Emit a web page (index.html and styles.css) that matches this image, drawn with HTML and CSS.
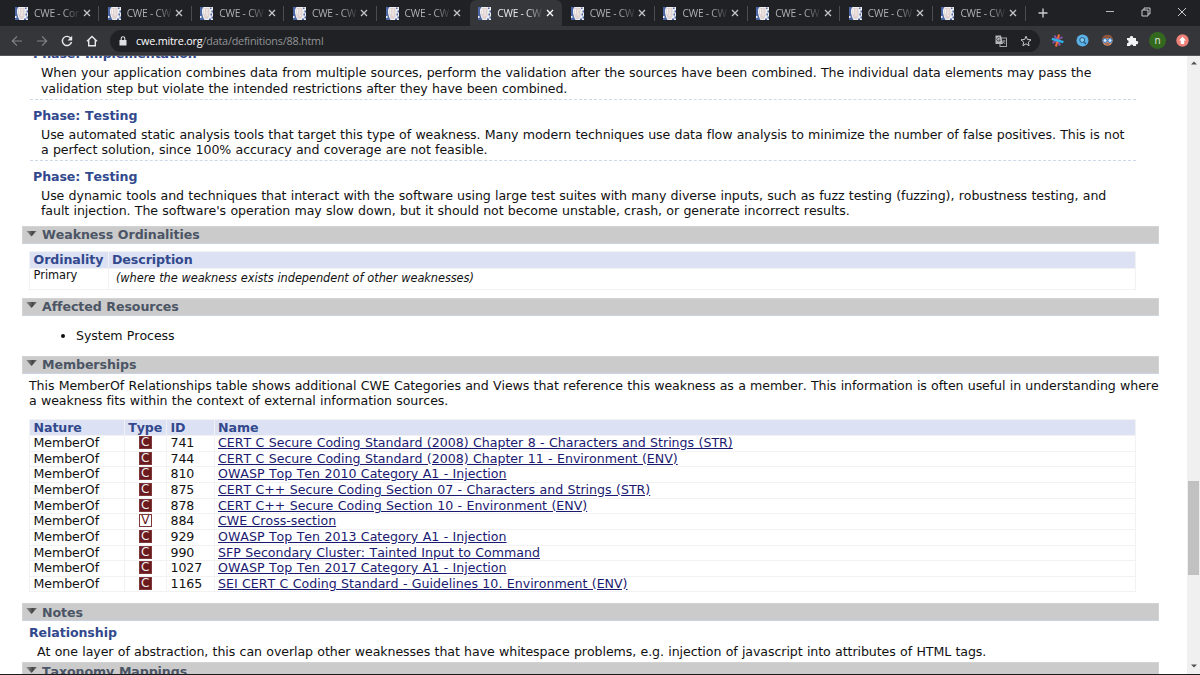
FILE: index.html
```html
<!DOCTYPE html>
<html lang="en">
  <head>
    <meta charset="UTF-8" />
    <meta name="viewport" content="width=device-width, initial-scale=1.0" />
    <title>CWE - CWE-88</title>
    <link rel="stylesheet" href="styles.css">
  </head>
  <body>
    <svg class="defs" width="0" height="0">
      <symbol id="favicon" viewBox="0 0 13 13">
        <rect width="13" height="13" fill="#eef0f4" />
        <path d="M0 0h3.500L2 2.500V6l1 4 1.500 3H0v-2h1.500V9H0zM10 .5h1.500V2H10zM11.500 3.500H13v2h-1.500zM10.500 6.500H12v2h-1.500zM11.500 9.500H13v2h-1.500zM9 11.500h2V13H9z" fill="#4c66a3" />
        <path d="M4 1C2.500 4 3 8 5 12h3l1.500-3V1z" fill="#e0d3d2" />
        <path d="M4.500 2v5M7 2v7" stroke="#f6f0ee" />
      </symbol>
      <symbol id="close" viewBox="0 0 8 8">
        <path d="M1 1l6 6M7 1L1 7" fill="none" stroke="currentColor" stroke-width="1.300" />
      </symbol>
    </svg>

    <div class="tabs">
      <div class="tab"><svg class="favicon"><use href="#favicon" /></svg><span>CWE - Cor</span><svg class="close"><use href="#close" /></svg></div>
      <div class="tab"><svg class="favicon"><use href="#favicon" /></svg><span>CWE - CW</span><svg class="close"><use href="#close" /></svg></div>
      <div class="tab"><svg class="favicon"><use href="#favicon" /></svg><span>CWE - CW</span><svg class="close"><use href="#close" /></svg></div>
      <div class="tab"><svg class="favicon"><use href="#favicon" /></svg><span>CWE - CW</span><svg class="close"><use href="#close" /></svg></div>
      <div class="tab before-active"><svg class="favicon"><use href="#favicon" /></svg><span>CWE - CW</span><svg class="close"><use href="#close" /></svg></div>
      <div class="tab active"><svg class="favicon"><use href="#favicon" /></svg><span>CWE - CW</span><svg class="close"><use href="#close" /></svg></div>
      <div class="tab"><svg class="favicon"><use href="#favicon" /></svg><span>CWE - CW</span><svg class="close"><use href="#close" /></svg></div>
      <div class="tab"><svg class="favicon"><use href="#favicon" /></svg><span>CWE - CW</span><svg class="close"><use href="#close" /></svg></div>
      <div class="tab"><svg class="favicon"><use href="#favicon" /></svg><span>CWE - CW</span><svg class="close"><use href="#close" /></svg></div>
      <div class="tab"><svg class="favicon"><use href="#favicon" /></svg><span>CWE - CW</span><svg class="close"><use href="#close" /></svg></div>
      <div class="tab"><svg class="favicon"><use href="#favicon" /></svg><span>CWE - CW</span><svg class="close"><use href="#close" /></svg></div>
      <svg class="new-tab" viewBox="0 0 10 10"><path d="M5 .5v9M.5 5h9" stroke="#c9cbce" stroke-width="1.400" /></svg>
      <div class="window-buttons">
        <svg viewBox="0 0 10 10"><path d="M1 4.500h8" stroke="#bbb" /></svg>
        <svg viewBox="0 0 10 10"><path d="M1 3h6v6H1zM3 3V1h6v6H7" fill="none" stroke="#ccc" /></svg>
        <svg viewBox="0 0 10 10"><path d="M1 1l8 8M9 1L1 9" stroke="#ccc" /></svg>
      </div>
    </div>

    <div class="toolbar">
      <div class="nav">
        <svg viewBox="0 0 12 12"><path d="M11 6H1.500M6 1.300L1.300 6 6 10.700" fill="none" stroke="#808286" stroke-width="1.200" /></svg>
        <svg viewBox="0 0 12 12"><path d="M1 6h9.500M6 1.300L10.700 6 6 10.700" fill="none" stroke="#808286" stroke-width="1.200" /></svg>
        <svg viewBox="0 0 12 12"><path d="M9.800 3.300A4.600 4.600 0 1 0 10.500 7" fill="none" stroke="#e8eaed" stroke-width="1.400" /><path d="M11.200.8v4.700H6.500z" fill="#e8eaed" /></svg>
        <svg viewBox="0 0 12 12"><path d="M1 6.300L6 1.500l5 4.800M2.700 5.200v5.600h6.600V5.200" fill="none" stroke="#e8eaed" stroke-width="1.400" /></svg>
      </div>
      <div class="address">
        <svg class="lock" viewBox="0 0 8 10"><path d="M.5 4h7v5.500h-7z" fill="#dfe0e2" /><path d="M2.200 4V2.300a1.800 1.600 0 0 1 3.600 0V4" fill="none" stroke="#dfe0e2" stroke-width="1.100" /></svg>
        <span class="url"><b>cwe.mitre.org</b>/data/definitions/88.html</span>
        <svg class="translate" viewBox="0 0 12 12"><rect x="5" y="3" width="6.500" height="8.500" fill="none" stroke="#b5b6b9" stroke-width=".9" /><path d="M.5.5H6l2 8.500H.5z" fill="#b5b6b9" /><path d="M5 3.200A1.800 1.800 0 1 0 5.300 5H3.700" fill="none" stroke="#303134" stroke-width=".8" /><path d="M7.500 6h3M9 5v1c0 1.500-1 2-1.500 2.500M8.500 7l1.700 2" fill="none" stroke="#b5b6b9" stroke-width=".7" /></svg>
        <svg class="star" viewBox="0 0 12 12"><path d="M6 1.200l1.400 3.300 3.600.3-2.700 2.400.8 3.500L6 8.800l-3.100 1.900.8-3.500L1 4.800l3.600-.3z" fill="none" stroke="#c9cacd" /></svg>
      </div>
      <div class="extensions">
        <svg viewBox="0 0 13 13"><path d="M3.500 1.500l5.500 10" stroke="#8656a8" stroke-width="2.200" /><path d="M8 .5L5 12.500" stroke="#ef6a3a" stroke-width="2.200" /><path d="M1.500 9L11.500 3" stroke="#8656a8" stroke-width="1.800" /><path d="M.8 4.800l11.600 3.400" stroke="#2fb3e8" stroke-width="2.400" /></svg>
        <svg viewBox="0 0 13 13"><circle cx="6.500" cy="6.500" r="6" fill="#5bb1e6" /><circle cx="6.200" cy="6" r="2.400" fill="#89cdf3" stroke="#24577d" /><path d="M8 8l2 2" stroke="#24577d" stroke-width="1.200" /></svg>
        <svg viewBox="0 0 13 13"><circle cx="6.500" cy="6.500" r="5.200" fill="#c98f6e" /><path d="M1.300 6C1 2 4 .8 6.500.8S12 2 11.700 6l-2-2-6 .5z" fill="#8d553b" /><circle cx="4" cy="6.500" r="2" fill="#d7ecff" stroke="#2b7fd0" /><circle cx="9" cy="6.500" r="2" fill="#d7ecff" stroke="#2b7fd0" /><path d="M4.500 10h4" stroke="#8d3f36" stroke-width=".8" /></svg>
        <svg viewBox="0 0 13 13"><path d="M1 4h2.900a1.700 1.700 0 1 1 3.300 0H10v3a1.700 1.700 0 1 1 0 3.200V12H7.300a1.600 1.600 0 0 0-3.200 0H1V9.300a1.600 1.600 0 0 0 0-3.200z" fill="#f1f3f4" /></svg>
        <span class="avatar">n</span>
        <svg viewBox="0 0 13 13"><circle cx="6.500" cy="6.500" r="6.200" fill="#ee8179" /><path d="M6.500 2.800L10 6.500H8.200V10H4.800V6.500H3z" fill="#fff" /></svg>
      </div>
    </div>

    <div class="viewport">
      <div class="page">
        <div class="phases">
          <div class="phase">
            <h4>Phase: Implementation</h4>
            <p><span class="tighter">When your application combines data from multiple sources, perform the validation after the sources have been combined. The individual data elements may pass the<br>validation step but violate the intended restrictions after they have been combined.</span></p>
          </div>
          <div class="phase">
            <h4>Phase: Testing</h4>
            <p><span class="tight">Use automated static analysis tools that target this type of weakness. Many modern techniques use data flow analysis to minimize the number of false positives. This is not<br>a perfect solution, since 100% accuracy and coverage are not feasible.</span></p>
          </div>
          <div class="phase">
            <h4>Phase: Testing</h4>
            <p>Use dynamic tools and techniques that interact with the software using large test suites with many diverse inputs, such as fuzz testing (fuzzing), robustness testing, and<br>fault injection. The software's operation may slow down, but it should not become unstable, crash, or generate incorrect results.</p>
          </div>
        </div>

        <h3 class="bar"><i class="arrow"></i>Weakness Ordinalities</h3>
        <div class="table ordinalities">
          <div class="row head"><div>Ordinality</div><div>Description</div></div>
          <div class="row"><div class="primary">Primary</div><div class="where">(where the weakness exists independent of other weaknesses)</div></div>
        </div>

        <h3 class="bar"><i class="arrow"></i>Affected Resources</h3>
        <ul class="resources">
          <li>System Process</li>
        </ul>

        <h3 class="bar"><i class="arrow"></i>Memberships</h3>
        <p class="intro tight">This MemberOf Relationships table shows additional CWE Categories and Views that reference this weakness as a member. This information is often useful in understanding where<br>a weakness fits within the context of external information sources.</p>
        <div class="table members">
          <div class="row head"><div>Nature</div><div>Type</div><div>ID</div><div>Name</div></div>
          <div class="row"><div>MemberOf</div><div><b class="type">C</b></div><div>741</div><div><a href="#">CERT C Secure Coding Standard (2008) Chapter 8 - Characters and Strings (STR)</a></div></div>
          <div class="row"><div>MemberOf</div><div><b class="type">C</b></div><div>744</div><div><a href="#">CERT C Secure Coding Standard (2008) Chapter 11 - Environment (ENV)</a></div></div>
          <div class="row"><div>MemberOf</div><div><b class="type">C</b></div><div>810</div><div><a href="#">OWASP Top Ten 2010 Category A1 - Injection</a></div></div>
          <div class="row"><div>MemberOf</div><div><b class="type">C</b></div><div>875</div><div><a href="#">CERT C++ Secure Coding Section 07 - Characters and Strings (STR)</a></div></div>
          <div class="row"><div>MemberOf</div><div><b class="type">C</b></div><div>878</div><div><a href="#">CERT C++ Secure Coding Section 10 - Environment (ENV)</a></div></div>
          <div class="row"><div>MemberOf</div><div><b class="type view">V</b></div><div>884</div><div><a href="#">CWE Cross-section</a></div></div>
          <div class="row"><div>MemberOf</div><div><b class="type">C</b></div><div>929</div><div><a href="#">OWASP Top Ten 2013 Category A1 - Injection</a></div></div>
          <div class="row"><div>MemberOf</div><div><b class="type">C</b></div><div>990</div><div><a href="#">SFP Secondary Cluster: Tainted Input to Command</a></div></div>
          <div class="row"><div>MemberOf</div><div><b class="type">C</b></div><div>1027</div><div><a href="#">OWASP Top Ten 2017 Category A1 - Injection</a></div></div>
          <div class="row"><div>MemberOf</div><div><b class="type">C</b></div><div>1165</div><div><a href="#">SEI CERT C Coding Standard - Guidelines 10. Environment (ENV)</a></div></div>
        </div>

        <h3 class="bar"><i class="arrow"></i>Notes</h3>
        <div class="note">
          <h4>Relationship</h4>
          <p>At one layer of abstraction, this can overlap other weaknesses that have whitespace problems, e.g. injection of javascript into attributes of HTML tags.</p>
        </div>
        <h3 class="bar"><i class="arrow"></i>Taxonomy Mappings</h3>
      </div>

      <div class="scrollbar">
        <svg viewBox="0 0 6 4"><path d="M0 3.500L3 .5l3 3z" fill="#505050" /></svg>
        <div class="thumb"></div>
        <svg class="down" viewBox="0 0 6 4"><path d="M0 .5l3 3 3-3z" fill="#505050" /></svg>
      </div>
    </div>
  </body>
</html>
```
FILE: styles.css
```css
* {
  box-sizing: border-box;
}
body {
  margin: 0;
  height: 675px;
  overflow: hidden;
  display: flex;
  flex-direction: column;
  background: #fff;
  color: #111;
  font-family: Verdana, 'DejaVu Sans', sans-serif;
  font-size: 12.6px;
  line-height: 15.3px;
  border-bottom: 1px solid #1c1a1e;
}
h3,
h4,
p,
ul {
  margin: 0;
  font-size: inherit;
}
svg {
  display: block;
  flex: none;
}
.defs {
  position: absolute;
}

/* browser window */
.tabs {
  height: 26px;
  flex: none;
  display: flex;
  align-items: center;
  padding-left: 6.5px;
  background: #202124;
  color: #adb0b4;
  font: 10.2px 'Open Sans', sans-serif;
}
.tab {
  width: 92.65px;
  height: 26px;
  flex: none;
  display: flex;
  align-items: center;
  padding-left: 8.5px;
  background: linear-gradient(#4a4c50, #4a4c50) right 6px / 1px 15px no-repeat;
}
.tab .favicon {
  width: 13px;
  height: 13px;
}
.tab span {
  width: 49px;
  margin: 0 0 0 6px;
  white-space: nowrap;
  letter-spacing: -.2px;
  mask-image: linear-gradient(to right, #000 60%, transparent 96%);
}
.tab .close {
  width: 8px;
  height: 8px;
  margin-left: -.5px;
  color: #c3c5c8;
}
.before-active {
  background: none;
}
.tab.active {
  background: #35363a;
  border-radius: 6px 6px 0 0;
  color: #e8eaed;
}
.active .close {
  color: #fff;
}
.new-tab {
  width: 10px;
  height: 10px;
  margin-left: 12px;
}
.window-buttons {
  display: flex;
  gap: 26px;
  margin: 0 13px 2px auto;
}
.window-buttons svg {
  width: 10px;
  height: 10px;
}
.toolbar {
  height: 30px;
  flex: none;
  display: flex;
  align-items: center;
  background: #35363a;
  border-bottom: 1px solid #55565a;
}
.nav {
  display: flex;
  gap: 13px;
  padding-left: 11px;
}
.nav svg {
  width: 12px;
  height: 12px;
}
.address {
  width: 930px;
  height: 22px;
  margin-left: 12px;
  padding: 0 8px 0 9px;
  display: flex;
  align-items: center;
  border-radius: 11px;
  background: #202124;
  color: #929498;
  font: 10.8px 'Open Sans', sans-serif;
  letter-spacing: -.2px;
}
.address b {
  font-weight: 400;
  color: #fff;
}
.lock {
  width: 8px;
  height: 10px;
}
.url {
  margin-left: 9px;
}
.translate {
  width: 12px;
  height: 12px;
  margin-left: auto;
}
.star {
  width: 12px;
  height: 12px;
  margin-left: 13px;
}
.extensions {
  display: flex;
  align-items: center;
  gap: 12px;
  margin-left: 11px;
}
.extensions svg {
  width: 13px;
  height: 13px;
}
.avatar {
  width: 17px;
  height: 17px;
  margin: 0 -2px;
  border-radius: 50%;
  background: #33691e;
  color: #e4eadf;
  font: 10px/16px 'Open Sans', sans-serif;
  text-align: center;
}

/* page */
.viewport {
  flex: 1;
  min-height: 0;
  display: flex;
  overflow: hidden;
}
.page {
  flex: 1;
  min-width: 0;
  padding-left: 21.5px;
  white-space: nowrap;
  font-kerning: none;
  word-spacing: .4px;
  letter-spacing: -.08px;
}
.tight {
  letter-spacing: -.09px;
}
.tighter {
  letter-spacing: -.105px;
}
.phases {
  width: 1106.5px;
  height: 170px;
  margin-left: 8px;
  overflow: hidden;
  display: flex;
  flex-direction: column;
  justify-content: flex-end;
}
.phase {
  height: 61.3px;
  flex: none;
  padding-top: 8px;
  border-bottom: 1px dashed #ccd9e8;
}
.phase:last-child {
  height: 65px;
  border: 0;
}
h4 {
  color: #32498d;
  padding-left: 3.5px;
}
.phase p {
  padding: 3.5px 0 0 11.5px;
}
.bar {
  width: 1137.5px;
  height: 18px;
  display: flex;
  align-items: center;
  background: #cbcbcb;
  border: 1px solid #d3d3d3;
  border-bottom-color: #ccd3e3;
  color: #4b5565;
}
.arrow {
  width: 11px;
  height: 6px;
  margin: -3px 5px 0 3.5px;
  clip-path: polygon(0 0, 100% 0, 50% 100%);
  background: linear-gradient(to right, #999, #444 60%, #777);
}
.table {
  width: 1107px;
  margin: 7px 0 0 7.5px;
  border: 1px solid #f2f2f4;
}
.row {
  display: grid;
  height: 15.63px;
  line-height: 13.8px;
  border-top: 1px solid #f2f2f4;
}
.row > div {
  padding-left: 3.5px;
  border-left: 1px solid #f2f2f4;
}
.row > div:first-child {
  border-left: 0;
}
.row.head {
  background: #dde1f4;
  border-top: 0;
  color: #32498d;
  font-weight: bold;
  line-height: 15.3px;
}
.ordinalities {
  height: 38.5px;
}
.ordinalities .row {
  grid-template-columns: 77.5px 1fr;
}
.ordinalities .row + .row {
  height: 21px;
}
.primary {
  font-size: 11.4px;
  line-height: 12.5px;
}
.row .where {
  font-size: 11.4px;
  font-style: italic;
  padding: 3.5px 0 0 7.5px;
}
.ordinalities + .bar {
  margin-top: 8px;
}
.resources {
  height: 40px;
  padding: 12.500px 0 0 54.5px;
}
.intro {
  padding: 4px 0 0 7.5px;
}
.members {
  margin-top: 10.5px;
}
.members .row {
  grid-template-columns: 93.5px 42.5px 47.5px 1fr;
}
.members .row > div:nth-child(2) {
  display: flex;
  justify-content: center;
  padding: 0;
}
.members a {
  color: #1a1a70;
  letter-spacing: -.01px;
}
.type {
  width: 13px;
  height: 13px;
  background: #6b1a1e;
  border: 1px solid #7c383b;
  color: #eee;
  font: 12px/11.5px 'DejaVu Sans', sans-serif;
  text-align: center;
}
.type.view {
  background: #fff;
  color: #6b1a1e;
}
.members + .bar {
  margin-top: 11px;
}
.note {
  height: 41px;
  padding: 4px 0 0 4px;
}
.note p {
  padding: 3.5px 0 0 11.5px;
}

.scrollbar {
  width: 13px;
  display: flex;
  flex-direction: column;
  align-items: center;
  background: #f0f0f0;
  padding: 5px 0 6px;
}
.scrollbar svg {
  width: 6px;
  height: 4px;
}
.thumb {
  width: 11px;
  height: 94px;
  margin-top: 416px;
  background: #c1c1c1;
}
.down {
  margin-top: auto;
}
```
